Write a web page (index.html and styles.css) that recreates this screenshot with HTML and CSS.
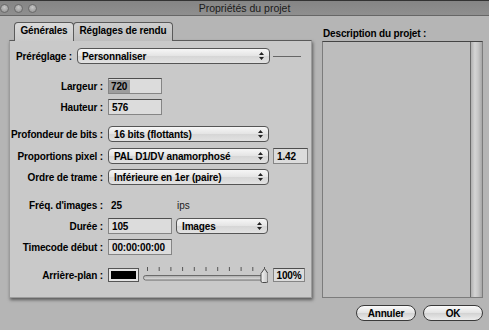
FILE: index.html
```html
<!DOCTYPE html>
<html lang="fr">
<head>
    <meta charset="UTF-8">
    <meta name="viewport" content="width=device-width, initial-scale=1.0">
    <title>Propriétés du projet</title>
    <link rel="stylesheet" href="styles.css">
</head>
<body>

    <div class="titlebar">
        <div class="lights">
            <span class="light"></span><span class="light"></span><span class="light"></span>
        </div>
        <div class="title">Propriétés du projet</div>
        <div></div>
    </div>

    <div class="main">
        <div class="left">
            <div class="tabs">
                <div class="tab active">Générales</div>
                <div class="tab">Réglages de rendu</div>
            </div>

            <div class="panel">
                <div class="row preset">
                    <div class="lbl">Préréglage :</div>
                    <div class="popup w193">Personnaliser
                        <svg class="arrows" width="5" height="8" viewBox="0 0 5 8"><path d="M2.5 0L5 3H0Z M0 5H5L2.5 8Z" fill="#222"/></svg>
                    </div>
                    <div class="rule"></div>
                </div>

                <div class="row sp-lg">
                    <div class="lbl">Largeur :</div>
                    <div class="field w54 tight"><span class="sel">720</span></div>
                </div>
                <div class="row">
                    <div class="lbl">Hauteur :</div>
                    <div class="field w54">576</div>
                </div>

                <div class="row sp-md">
                    <div class="lbl">Profondeur de bits :</div>
                    <div class="popup">16 bits (flottants)
                        <svg class="arrows" width="5" height="8" viewBox="0 0 5 8"><path d="M2.5 0L5 3H0Z M0 5H5L2.5 8Z" fill="#222"/></svg>
                    </div>
                </div>
                <div class="row sp-sm">
                    <div class="lbl">Proportions pixel :</div>
                    <div class="popup">PAL D1/DV anamorphosé
                        <svg class="arrows" width="5" height="8" viewBox="0 0 5 8"><path d="M2.5 0L5 3H0Z M0 5H5L2.5 8Z" fill="#222"/></svg>
                    </div>
                    <div class="field w35 ml4">1.42</div>
                </div>
                <div class="row">
                    <div class="lbl">Ordre de trame :</div>
                    <div class="popup">Inférieure en 1er (paire)
                        <svg class="arrows" width="5" height="8" viewBox="0 0 5 8"><path d="M2.5 0L5 3H0Z M0 5H5L2.5 8Z" fill="#222"/></svg>
                    </div>
                </div>

                <div class="row sp-grp">
                    <div class="lbl">Fréq. d'images :</div>
                    <div class="static">25</div>
                    <div class="unit">ips</div>
                </div>
                <div class="row">
                    <div class="lbl">Durée :</div>
                    <div class="field w64">105</div>
                    <div class="popup w92 ml4">Images
                        <svg class="arrows" width="5" height="8" viewBox="0 0 5 8"><path d="M2.5 0L5 3H0Z M0 5H5L2.5 8Z" fill="#222"/></svg>
                    </div>
                </div>
                <div class="row">
                    <div class="lbl">Timecode début :</div>
                    <div class="field w64">00:00:00:00</div>
                </div>

                <div class="row sp-grp">
                    <div class="lbl">Arrière-plan :</div>
                    <div class="well"><div class="swatch"></div></div>
                    <svg class="slider" width="125" height="16" viewBox="0 0 125 16">
                        <defs>
                            <linearGradient id="trk" x1="0" y1="0" x2="0" y2="1">
                                <stop offset="0" stop-color="#a8a8a8"/>
                                <stop offset="1" stop-color="#e6e6e6"/>
                            </linearGradient>
                            <linearGradient id="knb" x1="0" y1="0" x2="1" y2="0">
                                <stop offset="0" stop-color="#f4f4f4"/>
                                <stop offset="1" stop-color="#c4c4c4"/>
                            </linearGradient>
                        </defs>
                        <g stroke="#555" stroke-width="1">
                            <path d="M4.5 0V4 M16.2 0V4 M27.9 0V4 M39.6 0V4 M51.3 0V4 M63 0V4 M74.7 0V4 M86.4 0V4 M98.1 0V4 M109.8 0V4 M121.5 0V3"/>
                        </g>
                        <rect x="0.5" y="8.5" width="121" height="4.5" rx="2.2" fill="url(#trk)" stroke="#6a6a6a"/>
                        <path d="M118 6.5L121.5 1.5L125 6.5V14Q125 15.5 123.5 15.5H119.5Q118 15.5 118 14Z" fill="url(#knb)" stroke="#4a4a4a"/>
                    </svg>
                    <div class="field pct">100%</div>
                </div>
            </div>
        </div>

        <div class="right">
            <div class="desc-label">Description du projet :</div>
            <div class="desc">
                <div class="scroll"></div>
            </div>
        </div>
    </div>

    <div class="buttons">
        <div class="btn">Annuler</div>
        <div class="btn">OK</div>
    </div>

</body>
</html>
```

FILE: styles.css
```css
* {
    margin: 0;
    padding: 0;
    box-sizing: border-box;
}

body {
    width: 489px;
    height: 330px;
    overflow: hidden;
    background-color: #b5b5b5;
    font-family: "Liberation Sans", Arial, sans-serif;
    font-size: 10px;
    font-weight: bold;
    letter-spacing: -0.15px;
    color: #000;
}

/* title bar */

.titlebar {
    height: 16px;
    display: grid;
    grid-template-columns: 60px 1fr 60px;
    align-items: center;
    background: linear-gradient(#858585, #8f8f8f);
    border-top: 1px solid #333;
    border-bottom: 1px solid #666;
}

.lights {
    display: flex;
    gap: 5px;
}

.light {
    width: 9px;
    height: 9px;
    border-radius: 50%;
    border: 1px solid #6a6a6a;
    background: radial-gradient(circle at 50% 35%, #c6c6c6, #8e8e8e);
}

.title {
    text-align: center;
    font-weight: normal;
    font-size: 10.5px;
    letter-spacing: 0;
    color: #1a1a1a;
}

/* main area */

.main {
    display: flex;
    gap: 10px;
    padding: 6px 6px 0 9px;
}

.left {
    width: 303px;
}

.tabs {
    display: flex;
    margin-left: 5px;
    margin-bottom: -1px;
    height: 19px;
}

.tab {
    display: flex;
    align-items: center;
    justify-content: center;
    padding-bottom: 3px;
    height: 19px;
    border: 1px solid #5a5a5a;
    border-bottom: none;
    border-radius: 4px 4px 0 0;
    background: linear-gradient(#cfcfcf, #bdbdbd);
}

.tab:first-child {
    width: 60px;
}

.tab + .tab {
    width: 100px;
    margin-left: -1px;
}

.tab.active {
    position: relative;
    z-index: 1;
    background: linear-gradient(#dadada, #cacaca);
}

.panel {
    background-color: #c9c9c9;
    border: 1px solid #9c9c9c;
    border-top-color: #5a5a5a;
    padding: 7px 0 14px 0;
    box-shadow: 1px 2px 3px rgba(0, 0, 0, 0.5);
}

.row {
    display: flex;
    align-items: center;
    height: 16px;
}

.row + .row {
    margin-top: 5px;
}

.row.sp-lg {
    margin-top: 14px;
}

.row.sp-md {
    margin-top: 11px;
}

.row.sp-sm {
    margin-top: 6px;
}

.row.sp-grp {
    margin-top: 12px;
}

.lbl {
    width: 93px;
    margin-right: 5px;
    flex-shrink: 0;
    text-align: right;
    white-space: nowrap;
}

.preset .lbl {
    width: 61px;
    margin-left: 6px;
    margin-right: 0;
    text-align: left;
}

.rule {
    width: 28px;
    height: 1px;
    margin-left: 3px;
    background-color: #666;
}

/* controls */

.popup {
    display: flex;
    align-items: center;
    justify-content: space-between;
    width: 161px;
    height: 16px;
    padding: 0 5px 0 5px;
    border: 1px solid #555;
    border-radius: 4px;
    background: linear-gradient(#f6f6f6, #e4e4e4 50%, #d6d6d6 51%, #e2e2e2);
    white-space: nowrap;
}

.popup.w193 {
    width: 193px;
    padding-left: 4px;
}

.popup.w92 {
    width: 92px;
}

.arrows {
    flex-shrink: 0;
}

.field {
    display: flex;
    align-items: center;
    height: 16px;
    padding-left: 3px;
    border: 1px solid #858585;
    border-top-color: #4e4e4e;
    background-color: #dcdcdc;
    white-space: nowrap;
}

.field.tight {
    padding-left: 0;
}

.sel {
    background-color: #9c9c9c;
    padding: 0 3px 0 2px;
    line-height: 13px;
}

.w54 {
    width: 54px;
}

.w35 {
    width: 35px;
}

.w64 {
    width: 64px;
}

.ml4 {
    margin-left: 4px;
}

.static {
    width: 69px;
    padding-left: 3px;
}

.unit {
    font-weight: normal;
    color: #222;
    letter-spacing: 0;
}

.well {
    width: 31px;
    height: 14px;
    padding: 2px;
    border: 1px solid #555;
    background-color: #e4e4e4;
}

.swatch {
    width: 100%;
    height: 100%;
    background-color: #000;
}

.slider {
    margin-left: 4px;
}

.field.pct {
    width: 32px;
    height: 14px;
    margin-left: 5px;
    padding-left: 0;
    justify-content: center;
}

/* description */

.right {
    width: 161px;
    display: flex;
    flex-direction: column;
}

.desc-label {
    height: 19px;
    display: flex;
    align-items: flex-end;
    padding-left: 1px;
    padding-bottom: 1px;
    line-height: 12px;
}

.desc {
    flex: 1;
    display: flex;
    justify-content: flex-end;
    background-color: #bdbdbd;
    border: 1px solid #7c7c7c;
    border-top-color: #444;
}

.scroll {
    width: 12px;
    border-left: 1px solid #6a6a6a;
    background: linear-gradient(90deg, #b0b0b0, #d4d4d4 35%, #c6c6c6 65%, #a6a6a6);
}

/* buttons */

.buttons {
    display: flex;
    justify-content: flex-end;
    gap: 7px;
    margin-top: 7px;
    padding-right: 6px;
}

.btn {
    display: flex;
    align-items: center;
    justify-content: center;
    width: 60px;
    height: 16px;
    border: 1px solid #3a3a3a;
    border-radius: 8px;
    background: linear-gradient(#fbfbfb, #e2e2e2 50%, #d2d2d2 51%, #ececec);
}
```
